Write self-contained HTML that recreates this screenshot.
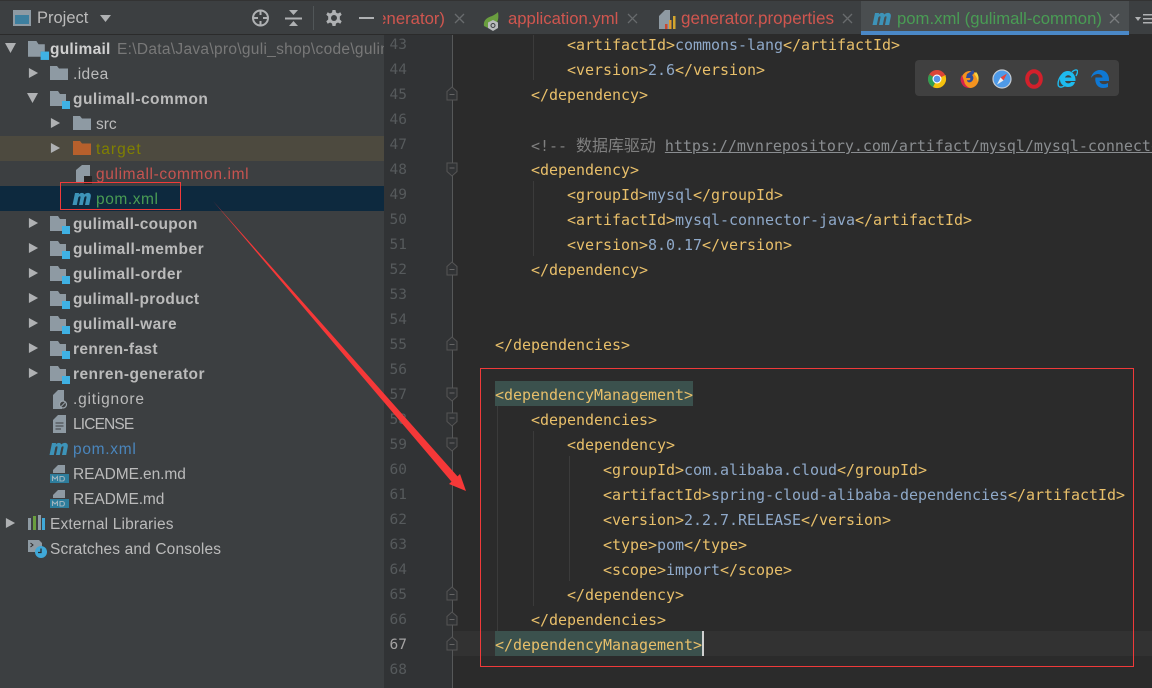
<!DOCTYPE html>
<html><head><meta charset="utf-8"><style>
html,body{margin:0;padding:0;width:1152px;height:688px;overflow:hidden;background:#2b2b2b}
body{position:relative;font-family:"Liberation Sans","Noto Sans CJK SC",sans-serif}
div,svg{position:absolute}
.bar{left:0;top:0;width:1152px;height:34px;background:#3c3f41;border-top:1px solid #333;box-sizing:border-box}
.tree{left:0;top:35px;width:384px;height:653px;background:#3c3f41}
.gut{left:384px;top:35px;width:68px;height:653px;background:#313335}
.r{font-size:15.5px;line-height:25px;height:25px;white-space:nowrap;color:#bbbbbb;margin-top:1px}
.b{font-weight:bold}
.ln{left:377px;width:30px;text-align:right;font:14.500px/25px "DejaVu Sans Mono",monospace;color:#565a5c;height:25px;margin-top:1px}
.c{font:15px/25px "DejaVu Sans Mono","Noto Sans CJK SC",monospace;letter-spacing:-.03px;height:25px;white-space:pre;color:#e8bf6a;margin-top:1px}
.c i{font-style:normal;color:#8fa9c9}
.g{width:1px;background:#3b3b3b}
.tab{font-size:16.7px;line-height:34px;height:34px;top:2px;white-space:nowrap}
</style></head><body>
<svg width="0" height="0" style="position:absolute"><defs>
<symbol id="o" viewBox="0 0 12 12"><path d="M0 1L11 1L5.500 11Z" fill="#afb1b3"/></symbol>
<symbol id="cl" viewBox="0 0 12 12"><path d="M1 0.500L11 6L1 11.500Z" fill="#afb1b3"/></symbol>
<symbol id="f" viewBox="0 0 18 14"><path d="M0 0H7L9 2.500H18V14H0Z" fill="#8e9aa3"/></symbol>
<symbol id="mod" viewBox="0 0 20 18"><path d="M0 0H8L10 3H16V10H12V15H0Z" fill="#8e9aa3"/><rect x="12" y="10" width="8" height="8" fill="#3fb1e3"/></symbol>
<symbol id="m" viewBox="0 0 20 14"><path d="M0.500 13.500L3 1.500H7L6.800 3C8.500 1 11.500 .8 12.300 3C14 .8 19.500 .3 18.800 5L17.200 13.500H13L14.500 6C14.800 4.200 13 4.500 12.300 6L10.800 13.500H7L8.500 6C8.800 4.200 7 4.500 6.300 6L4.800 13.500Z" fill="#3d93b8"/></symbol>
<symbol id="doc" viewBox="0 0 14 18"><path d="M0 5L6 0H14V18H0Z" fill="#8e9aa3"/></symbol>
<symbol id="md" viewBox="0 0 20 20"><path d="M3 9V6L8 1H15V9Z" fill="#8e9aa3"/><rect y="10" width="19" height="9" fill="#2d7d9c"/><path d="M2.500 17V12.500L5 15L7.500 12.500V17M10 12.500V17H12.500C15 17 15 12.500 12.500 12.500Z" fill="none" stroke="#9fb4be" stroke-width="1.100"/></symbol>
<symbol id="fup" viewBox="0 0 12 15"><path d="M1 14V5.500L6 1L11 5.500V14Z" fill="#313335" stroke="#555"/><path d="M3.500 8.500H8.500" stroke="#666"/></symbol>
<symbol id="fdn" viewBox="0 0 12 15"><path d="M1 1V9.500L6 14L11 9.500V1Z" fill="#313335" stroke="#555"/><path d="M3.500 6H8.500" stroke="#666"/></symbol>
</defs></svg>

<div class="tree"></div>
<div style="left:0;top:136px;width:384px;height:25px;background:#4d4a3f"></div>
<div style="left:0;top:186px;width:384px;height:25px;background:#0d293e"></div>
<div class="gut"></div>
<div style="left:452px;top:631px;width:700px;height:25px;background:#323232"></div>
<div style="left:452px;top:35px;width:1px;height:653px;background:#565859"></div>

<div class="bar"></div>
<svg style="left:13px;top:10px" width="18" height="16"><rect x="1" y="1" width="16" height="14" fill="#3d7f9f" stroke="#8e9aa3" stroke-width="2"/><rect x="2" y="2" width="14" height="3" fill="#8e9aa3"/></svg>
<div class="r" style="left:37px;top:5px;color:#bbb;font-size:16.500px">Project</div>
<svg style="left:99px;top:15px" width="13" height="8"><path d="M1 0H12L6.500 7Z" fill="#afb1b3"/></svg>
<svg style="left:251px;top:9px" width="19" height="18" fill="none" stroke="#afb1b3" stroke-width="2"><circle cx="9.500" cy="9" r="7.500"/><path d="M9.500 1V6M9.500 12V17M2 9H7M12 9H17"/></svg>
<svg style="left:285px;top:10px" width="17" height="17" fill="#afb1b3"><path d="M4 0H13L8.500 5ZM4 16H13L8.500 11Z"/><rect y="7.500" width="17" height="2"/></svg>
<div style="left:313px;top:6px;width:1px;height:24px;background:#515658"></div>
<svg style="left:325px;top:9px" width="18" height="18" viewBox="0 0 18 18"><path d="M7.500 1H10.500L11 3.500L13 4.500L15.300 3.300L16.700 5.700L14.800 7.500V10.500L16.700 12.300L15.300 14.700L13 13.500L11 14.500L10.500 17H7.500L7 14.500L5 13.500L2.700 14.700L1.300 12.300L3.200 10.500V7.500L1.300 5.700L2.700 3.300L5 4.500L7 3.500Z" fill="#afb1b3"/><circle cx="9" cy="9" r="3" fill="#3c3f41"/></svg>
<div style="left:359px;top:17px;width:15px;height:2px;background:#afb1b3"></div>

<div class="tab" style="left:383px;width:62px;overflow:hidden;color:#d0564f"><div style="right:0;top:0">generator)</div></div>
<svg style="left:454px;top:13px" width="11" height="11" stroke="#686b6d" stroke-width="1.300"><path d="M1 1L10 10M10 1L1 10"/></svg>
<svg style="left:483px;top:12px" width="19" height="19" viewBox="0 0 19 19"><path d="M1 14C0 7 6 5 9 4C11 3 13 2 15 0C16 6 15 10 12 13L5 16Z" fill="#6a9e3f"/><path d="M10 8L15 10.500V16L10 19L5 16V10.500Z" fill="#b9bcbd"/><circle cx="10" cy="13.500" r="2" fill="none" stroke="#3c3f41"/></svg>
<div class="tab" style="left:508px;color:#d0564f">application.yml</div>
<svg style="left:627px;top:13px" width="11" height="11" stroke="#686b6d" stroke-width="1.300"><path d="M1 1L10 10M10 1L1 10"/></svg>
<svg style="left:659px;top:9px" width="17" height="20" viewBox="0 0 17 20"><path d="M0 7L6 1H11V20H0Z" fill="#8e9aa3"/><rect x="6" y="15" width="2.500" height="5" fill="#c9472f"/><rect x="10" y="11" width="2.500" height="9" fill="#e09b2d"/><rect x="14" y="7" width="2.500" height="13" fill="#d3a62e"/></svg>
<div class="tab" style="left:681px;color:#d0564f;font-size:17.100px">generator.properties</div>
<svg style="left:842px;top:13px" width="11" height="11" stroke="#686b6d" stroke-width="1.300"><path d="M1 1L10 10M10 1L1 10"/></svg>
<div style="left:861px;top:1px;width:268px;height:30px;background:#4a4e50"></div>
<div style="left:861px;top:31px;width:268px;height:4px;background:#4a88c7"></div>
<svg style="left:872px;top:11px" width="20" height="15"><use href="#m"/></svg>
<div class="tab" style="left:897px;width:204px;overflow:hidden;color:#499c54">pom.xml (gulimall-common)</div>
<svg style="left:1109px;top:13px" width="11" height="11" stroke="#7a7d7f" stroke-width="1.300"><path d="M1 1L10 10M10 1L1 10"/></svg>
<svg style="left:1135px;top:13px" width="17" height="11" fill="#afb1b3"><path d="M0 4H6L3 8Z"/><rect x="8" y="1" width="9" height="1.500"/><rect x="8" y="5" width="9" height="1.500"/><rect x="8" y="9" width="9" height="1.500"/></svg>

<!-- tree -->
<svg style="left:5px;top:42px" width="12" height="12"><use href="#o"/></svg>
<svg style="left:28px;top:41px" width="21" height="19"><use href="#mod"/></svg>
<div class="r b" style="left:50px;top:36px;color:#d0d0d0;letter-spacing:.25px">gulimail</div>
<div class="r" style="left:117px;top:36px;width:267px;overflow:hidden;color:#787878;letter-spacing:.3px">E:\Data\Java\pro\guli_shop\code\gulimall</div>

<svg style="left:28px;top:67px" width="11" height="12"><use href="#cl"/></svg>
<svg style="left:50px;top:66px" width="18" height="14"><use href="#f"/></svg>
<div class="r" style="left:73px;top:61px;letter-spacing:.4px">.idea</div>

<svg style="left:27px;top:92px" width="12" height="12"><use href="#o"/></svg>
<svg style="left:50px;top:91px" width="20" height="18"><use href="#mod"/></svg>
<div class="r b" style="left:73px;top:86px;letter-spacing:.47px">gulimall-common</div>

<svg style="left:50px;top:117px" width="11" height="12"><use href="#cl"/></svg>
<svg style="left:73px;top:116px" width="18" height="14"><use href="#f"/></svg>
<div class="r" style="left:96px;top:111px">src</div>

<svg style="left:50px;top:142px" width="11" height="12"><use href="#cl"/></svg>
<svg style="left:73px;top:141px" width="18" height="14"><path d="M0 0H7L9 2.500H18V14H0Z" fill="#b7602c"/></svg>
<div class="r" style="left:96px;top:136px;color:#808000;letter-spacing:1px">target</div>

<svg style="left:76px;top:165px" width="14" height="18"><use href="#doc"/></svg>
<div style="left:84px;top:176px;width:8px;height:8px;background:#262626"></div>
<div class="r" style="left:96px;top:161px;color:#c75450;letter-spacing:.63px">gulimall-common.iml</div>

<svg style="left:72px;top:191px" width="20" height="15"><use href="#m"/></svg>
<div class="r" style="left:96px;top:186px;color:#499c54;letter-spacing:.57px">pom.xml</div>

<svg style="left:28px;top:217px" width="11" height="12"><use href="#cl"/></svg>
<svg style="left:50px;top:216px" width="20" height="18"><use href="#mod"/></svg>
<div class="r b" style="left:73px;top:211px;letter-spacing:.33px">gulimall-coupon</div>

<svg style="left:28px;top:242px" width="11" height="12"><use href="#cl"/></svg>
<svg style="left:50px;top:241px" width="20" height="18"><use href="#mod"/></svg>
<div class="r b" style="left:73px;top:236px;letter-spacing:.47px">gulimall-member</div>

<svg style="left:28px;top:267px" width="11" height="12"><use href="#cl"/></svg>
<svg style="left:50px;top:266px" width="20" height="18"><use href="#mod"/></svg>
<div class="r b" style="left:73px;top:261px;letter-spacing:.43px">gulimall-order</div>

<svg style="left:28px;top:292px" width="11" height="12"><use href="#cl"/></svg>
<svg style="left:50px;top:291px" width="20" height="18"><use href="#mod"/></svg>
<div class="r b" style="left:73px;top:286px;letter-spacing:.31px">gulimall-product</div>

<svg style="left:28px;top:317px" width="11" height="12"><use href="#cl"/></svg>
<svg style="left:50px;top:316px" width="20" height="18"><use href="#mod"/></svg>
<div class="r b" style="left:73px;top:311px;letter-spacing:.38px">gulimall-ware</div>

<svg style="left:28px;top:342px" width="11" height="12"><use href="#cl"/></svg>
<svg style="left:50px;top:341px" width="20" height="18"><use href="#mod"/></svg>
<div class="r b" style="left:73px;top:336px;letter-spacing:.36px">renren-fast</div>

<svg style="left:28px;top:367px" width="11" height="12"><use href="#cl"/></svg>
<svg style="left:50px;top:366px" width="20" height="18"><use href="#mod"/></svg>
<div class="r b" style="left:73px;top:361px;letter-spacing:.44px">renren-generator</div>

<svg style="left:53px;top:390px" width="15" height="19" viewBox="0 0 15 19"><path d="M0 5L5 0H11V12H9V19H0Z" fill="#8e9aa3"/><circle cx="10" cy="14.500" r="3.500" fill="#3c3f41" stroke="#9aa4ab" stroke-width="1.200"/><path d="M7.800 16.800L12.300 12.200" stroke="#9aa4ab"/></svg>
<div class="r" style="left:73px;top:386px;letter-spacing:.8px">.gitignore</div>

<svg style="left:53px;top:415px" width="13" height="18" viewBox="0 0 13 18"><path d="M0 5L5 0H13V18H0Z" fill="#8e9aa3"/><path d="M2.500 8H10.500M2.500 11H10.500M2.500 14H8" stroke="#3c3f41"/></svg>
<div class="r" style="left:73px;top:411px;letter-spacing:-.85px">LICENSE</div>

<svg style="left:49px;top:441px" width="20" height="15"><use href="#m"/></svg>
<div class="r" style="left:73px;top:436px;color:#4a86bd;letter-spacing:.7px">pom.xml</div>

<svg style="left:50px;top:464px" width="20" height="20"><use href="#md"/></svg>
<div class="r" style="left:73px;top:461px;letter-spacing:-.08px">README.en.md</div>
<svg style="left:50px;top:489px" width="20" height="20"><use href="#md"/></svg>
<div class="r" style="left:73px;top:486px;letter-spacing:-.1px">README.md</div>

<svg style="left:5px;top:517px" width="11" height="12"><use href="#cl"/></svg>
<svg style="left:28px;top:515px" width="18" height="16"><rect y="3" width="3" height="12" fill="#8e9aa3"/><rect x="5" y="1" width="3" height="14" fill="#6a9e3f"/><rect x="10" y="0" width="3" height="15" fill="#8e9aa3"/><rect x="14" y="3" width="3" height="12" fill="#3fa8d8"/></svg>
<div class="r" style="left:50px;top:511px;letter-spacing:.17px">External Libraries</div>

<svg style="left:28px;top:539px" width="20" height="20"><path d="M0 1H11L14 4V13H0Z" fill="#8e9aa3"/><path d="M2.500 4L5 6L2.500 8" fill="none" stroke="#2b2b2b"/><circle cx="13" cy="13" r="6" fill="#3fa8d8"/><path d="M13 9.500V13.500H10" fill="none" stroke="#2b2b2b" stroke-width="1.300"/></svg>
<div class="r" style="left:50px;top:536px;letter-spacing:.14px">Scratches and Consoles</div>

<!-- line numbers -->
<div class="ln" style="top:32px">43</div>
<div class="ln" style="top:57px">44</div>
<div class="ln" style="top:82px">45</div>
<div class="ln" style="top:107px">46</div>
<div class="ln" style="top:132px">47</div>
<div class="ln" style="top:157px">48</div>
<div class="ln" style="top:182px">49</div>
<div class="ln" style="top:207px">50</div>
<div class="ln" style="top:232px">51</div>
<div class="ln" style="top:257px">52</div>
<div class="ln" style="top:282px">53</div>
<div class="ln" style="top:307px">54</div>
<div class="ln" style="top:332px">55</div>
<div class="ln" style="top:357px">56</div>
<div class="ln" style="top:382px">57</div>
<div class="ln" style="top:407px">58</div>
<div class="ln" style="top:432px">59</div>
<div class="ln" style="top:457px">60</div>
<div class="ln" style="top:482px">61</div>
<div class="ln" style="top:507px">62</div>
<div class="ln" style="top:532px">63</div>
<div class="ln" style="top:557px">64</div>
<div class="ln" style="top:582px">65</div>
<div class="ln" style="top:607px">66</div>
<div class="ln" style="top:632px;color:#a4a3a3">67</div>
<div class="ln" style="top:657px">68</div>

<!-- fold markers -->
<svg style="left:446px;top:86px" width="12" height="15"><use href="#fup"/></svg>
<svg style="left:446px;top:162px" width="12" height="15"><use href="#fdn"/></svg>
<svg style="left:446px;top:261px" width="12" height="15"><use href="#fup"/></svg>
<svg style="left:446px;top:336px" width="12" height="15"><use href="#fup"/></svg>
<svg style="left:446px;top:387px" width="12" height="15"><use href="#fdn"/></svg>
<svg style="left:446px;top:412px" width="12" height="15"><use href="#fdn"/></svg>
<svg style="left:446px;top:437px" width="12" height="15"><use href="#fdn"/></svg>
<svg style="left:446px;top:586px" width="12" height="15"><use href="#fup"/></svg>
<svg style="left:446px;top:611px" width="12" height="15"><use href="#fup"/></svg>
<svg style="left:446px;top:636px" width="12" height="15"><use href="#fup"/></svg>

<!-- indent guides -->
<div class="g" style="left:533px;top:35px;height:45px"></div>
<div class="g" style="left:533px;top:181px;height:75px"></div>
<div class="g" style="left:497px;top:406px;height:225px"></div>
<div class="g" style="left:533px;top:431px;height:175px"></div>
<div class="g" style="left:569px;top:456px;height:125px"></div>

<!-- highlights -->
<div style="left:495px;top:381px;width:198px;height:25px;background:#3b514d"></div>
<div style="left:495px;top:631px;width:207px;height:25px;background:#3b514d"></div>
<div style="left:702px;top:631px;width:2px;height:25px;background:#d0d0d0"></div>

<!-- code -->
<div class="c" style="left:567px;top:32px">&lt;artifactId&gt;<i>commons-lang</i>&lt;/artifactId&gt;</div>
<div class="c" style="left:567px;top:57px">&lt;version&gt;<i>2.6</i>&lt;/version&gt;</div>
<div class="c" style="left:531px;top:82px">&lt;/dependency&gt;</div>
<div class="c" style="left:531px;top:132px;width:621px;overflow:hidden;color:#808080">&lt;!-- <span style="font-size:16px">数据库驱动</span> <span style="text-decoration:underline;color:#8a8d90">https://mvnrepository.com/artifact/mysql/mysql-connector-java</span></div>
<div class="c" style="left:531px;top:157px">&lt;dependency&gt;</div>
<div class="c" style="left:567px;top:182px">&lt;groupId&gt;<i>mysql</i>&lt;/groupId&gt;</div>
<div class="c" style="left:567px;top:207px">&lt;artifactId&gt;<i>mysql-connector-java</i>&lt;/artifactId&gt;</div>
<div class="c" style="left:567px;top:232px">&lt;version&gt;<i>8.0.17</i>&lt;/version&gt;</div>
<div class="c" style="left:531px;top:257px">&lt;/dependency&gt;</div>
<div class="c" style="left:495px;top:332px">&lt;/dependencies&gt;</div>
<div class="c" style="left:495px;top:382px">&lt;dependencyManagement&gt;</div>
<div class="c" style="left:531px;top:407px">&lt;dependencies&gt;</div>
<div class="c" style="left:567px;top:432px">&lt;dependency&gt;</div>
<div class="c" style="left:603px;top:457px">&lt;groupId&gt;<i>com.alibaba.cloud</i>&lt;/groupId&gt;</div>
<div class="c" style="left:603px;top:482px">&lt;artifactId&gt;<i>spring-cloud-alibaba-dependencies</i>&lt;/artifactId&gt;</div>
<div class="c" style="left:603px;top:507px">&lt;version&gt;<i>2.2.7.RELEASE</i>&lt;/version&gt;</div>
<div class="c" style="left:603px;top:532px">&lt;type&gt;<i>pom</i>&lt;/type&gt;</div>
<div class="c" style="left:603px;top:557px">&lt;scope&gt;<i>import</i>&lt;/scope&gt;</div>
<div class="c" style="left:567px;top:582px">&lt;/dependency&gt;</div>
<div class="c" style="left:531px;top:607px">&lt;/dependencies&gt;</div>
<div class="c" style="left:495px;top:632px">&lt;/dependencyManagement&gt;</div>

<!-- browser popup -->
<div style="left:915px;top:60px;width:204px;height:36px;background:#404040;border-radius:4px"></div>
<svg style="left:927px;top:69px" width="20" height="20" viewBox="0 0 20 20"><circle cx="10" cy="10" r="9" fill="#db4437"/><path d="M10 10L2.200 5.500A9 9 0 0 0 6 18.100Z" fill="#2f9e52"/><path d="M10 10L6 18.100A9 9 0 0 0 18.700 7.500L18.700 6Z" fill="#f4c20d"/><circle cx="10" cy="10" r="4.500" fill="#fff"/><circle cx="10" cy="10" r="3.400" fill="#5a93e8"/></svg>
<svg style="left:960px;top:69px" width="20" height="20" viewBox="0 0 20 20"><circle cx="10" cy="10.500" r="8.500" fill="#f4931f"/><path d="M2 6A8.500 8.500 0 0 0 10 19A8.500 8.500 0 0 1 4 12Z" fill="#d6234b"/><path d="M7 5L13 1C15 3 14 5 12 6C14 8 14 11 11 13C9 14 7 13 7 11C10 12 11 10 10 9H6Z" fill="#2e4b9a"/><path d="M16 3C19 6 19 10 18 13C17 8 15 6 14 5Z" fill="#f9d03f"/></svg>
<svg style="left:992px;top:69px" width="20" height="20" viewBox="0 0 20 20"><circle cx="10" cy="10" r="9" fill="#4e9ae8" stroke="#c5cbd2" stroke-width="1.200"/><path d="M15 4.500L11.500 11.500L8.500 8.500Z" fill="#e8433a"/><path d="M5 15.500L8.500 8.500L11.500 11.500Z" fill="#e9eef2"/></svg>
<svg style="left:1024px;top:69px" width="20" height="20" viewBox="0 0 20 20"><ellipse cx="10" cy="10" rx="6.800" ry="7.800" fill="none" stroke="#d3202b" stroke-width="4"/></svg>
<svg style="left:1057px;top:69px" width="21" height="20" viewBox="0 0 21 20"><path d="M11 2C5 2 3 7 3 10.500C3 15 7 18 11 18C14.500 18 17 16.500 18 13H14C13 15 9 15 8 12H18.500C19 6 15 2 11 2ZM8 8.500C9 5.500 13.500 5.500 14.500 8.500Z" fill="#1ebbee" fill-rule="evenodd"/><path d="M6 5C3 7 0 13 1.500 17C3 19 6 18 8 16.500M15 3C17 1 20 0 20.500 2C20.800 3.500 20 5 19 7" fill="none" stroke="#1ebbee" stroke-width="1.400"/></svg>
<svg style="left:1090px;top:69px" width="20" height="20" viewBox="0 0 20 20"><path d="M10 1C5 1 1.500 5 1 9C3 6 6 5 8 5C11 5 12.500 7 12.500 8.500H5.500C4.500 13 7 19 13 19C15 19 17 18.500 18 18V14C15 16 10 15.500 9.500 12H19C19.500 6 16 1 10 1Z" fill="#0f78d4"/></svg>

<!-- annotations -->
<div style="left:60px;top:182px;width:119px;height:26px;border:1.500px solid #f03a3a"></div>
<div style="left:480px;top:368px;width:652px;height:297px;border:1.500px solid #f03a3a"></div>
<svg style="left:0;top:0" width="1152" height="688"><path d="M213 201L457.500 476.400L460 474L466 491L449 484L451.500 481.600Z" fill="#f53838"/></svg>
</body></html>
